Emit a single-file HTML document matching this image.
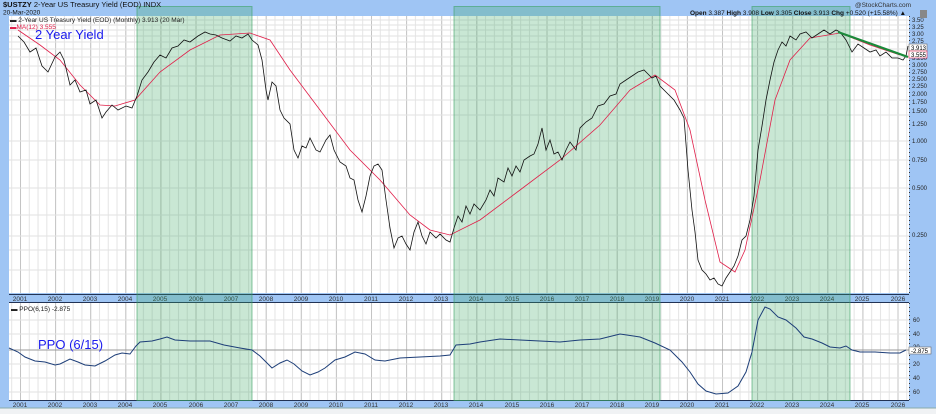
<!DOCTYPE html>
<html><head><meta charset="utf-8"><style>
html,body{margin:0;padding:0;background:#fff;}
svg{display:block;font-family:"Liberation Sans",sans-serif;}
</style></head><body>
<svg width="936" height="414" viewBox="0 0 936 414" xmlns="http://www.w3.org/2000/svg">
<defs>
<pattern id="minor" x="20" y="0" width="8.775" height="414" patternUnits="userSpaceOnUse">
<line x1="0.5" y1="0" x2="0.5" y2="414" stroke="#e4e4e4" stroke-width="1"/>
</pattern>
<pattern id="major" x="20" y="0" width="35.1" height="414" patternUnits="userSpaceOnUse">
<line x1="0.5" y1="0" x2="0.5" y2="414" stroke="#c4c4c4" stroke-width="1"/>
</pattern>
</defs>
<rect x="0" y="0" width="936" height="414" fill="#9fc5f4"/>
<rect x="0" y="408" width="936" height="6" fill="#f0f2f4"/>
<rect x="9" y="16" width="900" height="277" fill="#fff"/>
<rect x="9" y="16" width="900" height="277" fill="url(#minor)"/>
<rect x="9" y="16" width="900" height="277" fill="url(#major)"/>
<g stroke="#e2e2e2">
<line x1="9" y1="20" x2="909" y2="20"/><line x1="9" y1="25" x2="909" y2="25"/><line x1="9" y1="30" x2="909" y2="30"/>
<line x1="9" y1="36" x2="909" y2="36"/><line x1="9" y1="42" x2="909" y2="42"/><line x1="9" y1="49" x2="909" y2="49"/>
<line x1="9" y1="57" x2="909" y2="57"/><line x1="9" y1="66" x2="909" y2="66"/><line x1="9" y1="76" x2="909" y2="76"/>
<line x1="9" y1="86" x2="909" y2="86"/><line x1="9" y1="100" x2="909" y2="100"/><line x1="9" y1="115" x2="909" y2="115"/>
<line x1="9" y1="141" x2="909" y2="141"/><line x1="9" y1="160" x2="909" y2="160"/><line x1="9" y1="188" x2="909" y2="188"/>
<line x1="9" y1="215" x2="909" y2="215"/><line x1="9" y1="236" x2="909" y2="236"/><line x1="9" y1="250" x2="909" y2="250"/><line x1="9" y1="270" x2="909" y2="270"/>
</g>
<rect x="9" y="303" width="900" height="97" fill="#fff"/>
<rect x="9" y="303" width="900" height="97" fill="url(#minor)"/>
<rect x="9" y="303" width="900" height="97" fill="url(#major)"/>
<g stroke="#e2e2e2">
<line x1="9" y1="320" x2="909" y2="320"/><line x1="9" y1="334" x2="909" y2="334"/><line x1="9" y1="364" x2="909" y2="364"/><line x1="9" y1="378" x2="909" y2="378"/><line x1="9" y1="392" x2="909" y2="392"/>
</g>
<line x1="9" y1="350" x2="909" y2="350" stroke="#999"/>
<rect x="9" y="294" width="900" height="9" fill="#9fc5f4"/>
<line x1="9" y1="294.5" x2="909" y2="294.5" stroke="#223355"/>
<line x1="9" y1="302.5" x2="909" y2="302.5" stroke="#223355"/>
<line x1="9" y1="400.5" x2="909" y2="400.5" stroke="#223355"/>
<line x1="0" y1="408" x2="936" y2="408" stroke="#8aa" />
<g font-size="6.5" fill="#333" text-anchor="middle">
<text x="20" y="301">2001</text><text x="55" y="301">2002</text><text x="90" y="301">2003</text><text x="125" y="301">2004</text><text x="160" y="301">2005</text><text x="196" y="301">2006</text><text x="231" y="301">2007</text><text x="266" y="301">2008</text><text x="301" y="301">2009</text><text x="336" y="301">2010</text><text x="371" y="301">2011</text><text x="406" y="301">2012</text><text x="441" y="301">2013</text><text x="476" y="301">2014</text><text x="512" y="301">2015</text><text x="547" y="301">2016</text><text x="582" y="301">2017</text><text x="617" y="301">2018</text><text x="652" y="301">2019</text><text x="687" y="301">2020</text><text x="722" y="301">2021</text><text x="757" y="301">2022</text><text x="792" y="301">2023</text><text x="827" y="301">2024</text><text x="862" y="301">2025</text><text x="898" y="301">2026</text>
</g>
<g font-size="6.5" fill="#333" text-anchor="middle">
<text x="20" y="407">2001</text><text x="55" y="407">2002</text><text x="90" y="407">2003</text><text x="125" y="407">2004</text><text x="160" y="407">2005</text><text x="196" y="407">2006</text><text x="231" y="407">2007</text><text x="266" y="407">2008</text><text x="301" y="407">2009</text><text x="336" y="407">2010</text><text x="371" y="407">2011</text><text x="406" y="407">2012</text><text x="441" y="407">2013</text><text x="476" y="407">2014</text><text x="512" y="407">2015</text><text x="547" y="407">2016</text><text x="582" y="407">2017</text><text x="617" y="407">2018</text><text x="652" y="407">2019</text><text x="687" y="407">2020</text><text x="722" y="407">2021</text><text x="757" y="407">2022</text><text x="792" y="407">2023</text><text x="827" y="407">2024</text><text x="862" y="407">2025</text><text x="898" y="407">2026</text>
</g>
<g fill="rgba(60,170,100,0.28)" stroke="rgba(60,160,100,0.6)" stroke-width="1">
<rect x="137" y="6.5" width="115" height="394"/>
<rect x="454" y="6.5" width="206" height="394"/>
<rect x="752" y="6.5" width="98" height="394"/>
</g>
<polyline fill="none" stroke="#e0204a" stroke-width="0.8" points="18,30 40,45 60,60 80,85 100,105 115,106 135,100 160,72 190,50 220,35 250,33 270,40 290,70 320,110 350,150 380,180 410,215 430,230 450,235 480,220 520,190 560,160 600,125 630,90 655,75 675,90 690,130 705,200 720,262 735,272 745,250 760,180 775,100 790,60 810,38 840,33 870,45 900,55"/>
<polyline fill="none" stroke="#111" stroke-width="0.8" points="18,36 24,42 30,52 36,48 42,66 48,72 55,57 60,52 64,60 70,85 75,80 80,92 86,90 90,104 96,100 102,118 106,112 112,105 118,110 126,106 132,108 137,96 142,80 148,72 154,62 160,55 166,58 172,48 178,46 184,40 190,42 198,36 205,32 210,34 216,35 222,38 230,41 236,36 242,38 248,34 252,40 258,45 262,60 266,90 268,100 272,82 276,86 280,110 284,118 290,124 294,150 298,158 302,146 306,148 310,138 316,150 320,152 326,140 330,135 334,150 340,162 346,166 350,178 354,180 358,200 362,212 366,196 370,176 374,166 378,164 382,170 386,200 390,228 394,248 398,238 402,236 406,244 410,250 414,232 418,222 422,236 426,244 430,232 436,238 440,234 446,240 450,242 454,228 458,216 462,222 466,206 470,214 474,204 480,210 486,200 490,190 494,196 498,178 504,182 508,168 512,176 516,166 520,172 524,160 530,156 534,154 538,144 542,128 546,150 550,140 554,154 558,152 562,160 566,150 570,142 576,150 580,128 586,122 592,118 598,106 604,104 610,96 616,94 620,84 626,80 632,76 638,72 644,70 648,74 652,78 656,76 660,86 666,92 670,96 674,100 680,110 684,118 688,170 692,210 695,232 698,260 702,270 706,274 710,280 714,278 718,284 722,286 726,278 730,272 734,266 738,256 742,240 746,236 750,220 754,196 758,150 762,126 766,100 770,80 774,62 778,50 782,42 786,46 790,36 796,40 800,34 806,32 812,38 818,34 824,30 830,34 836,30 840,32 846,40 852,52 858,44 864,48 870,52 876,50 880,56 886,52 892,58 898,58 903,60 906,56 908,46"/>
<line x1="838" y1="32" x2="908" y2="57" stroke="#1a8a3a" stroke-width="2.2"/>
<polyline fill="none" stroke="#1d3e78" stroke-width="1" points="9,348 18,352 25,357 35,361 45,362 55,365 60,364 70,359 78,362 85,365 95,366 105,361 115,355 122,353 130,354 136,346 140,342 152,341 160,339 167,337 175,340 190,341 210,341 224,345 240,348 252,350 260,356 266,362 272,368 280,363 287,360 294,364 302,371 310,375 318,372 325,368 335,360 345,357 355,352 365,354 375,360 385,361 400,358 420,357 440,356 450,355 456,345 470,344 480,342 500,339 520,340 540,341 560,342 580,340 600,339 620,334 640,337 655,343 670,350 682,362 690,372 698,384 706,391 716,394 728,393 738,386 746,372 752,352 758,320 765,307 770,309 778,317 786,320 796,328 804,337 812,339 822,343 830,347 840,348 846,346 852,350 860,352 875,352 890,353 900,353 906,350"/>
<line x1="909.5" y1="16" x2="909.5" y2="293" stroke="#333" stroke-dasharray="1,3"/>
<line x1="909.5" y1="303" x2="909.5" y2="400" stroke="#333" stroke-dasharray="1,3"/>
<g font-size="6" fill="#222">
<text x="912" y="22">3.50</text><text x="912" y="29">3.25</text><text x="912" y="36">3.00</text><text x="912" y="43">2.75</text><text x="912" y="60">3.250</text><text x="912" y="67">3.000</text><text x="912" y="74">2.750</text><text x="912" y="81">2.500</text><text x="912" y="88">2.250</text><text x="912" y="96">2.000</text><text x="912" y="104">1.750</text><text x="912" y="113">1.500</text><text x="912" y="126">1.250</text><text x="912" y="143">1.000</text><text x="912" y="162">0.750</text><text x="912" y="190">0.500</text><text x="912" y="237">0.250</text>
<text x="913" y="322">60</text><text x="913" y="336">40</text><text x="913" y="349">20</text><text x="913" y="366">20</text><text x="913" y="380">40</text><text x="913" y="394">60</text>
</g>
<rect x="909" y="44" width="18" height="7" fill="#fff" stroke="#666" stroke-width="0.6"/>
<text x="911" y="50" font-size="6" fill="#000">3.913</text>
<rect x="909" y="51" width="18" height="7" fill="#fff" stroke="#e0204a" stroke-width="0.6"/>
<text x="911" y="57" font-size="6" fill="#000">3.555</text>
<rect x="909" y="347" width="22" height="7" fill="#fff" stroke="#666" stroke-width="0.6"/>
<text x="911" y="353" font-size="6" fill="#000">-2.875</text>
<text x="3" y="7" font-size="7.5" fill="#111"><tspan font-weight="bold">$USTZY</tspan> 2-Year US Treasury Yield (EOD) INDX</text>
<text x="3" y="14.5" font-size="6.5" fill="#111">20-Mar-2020</text>
<text x="10" y="22" font-size="6.5" fill="#222">▬ 2-Year US Treasury Yield (EOD) (Monthly) 3.913 (20 Mar)</text>
<text x="10" y="29" font-size="6.5" fill="#e0204a">▬MA(12) 3.555</text>
<text x="35" y="39" font-size="13" fill="#1a1aee">2 Year Yield</text>
<text x="38" y="349" font-size="13" fill="#1a1aee">PPO (6/15)</text>
<text x="11" y="311" font-size="6.5" fill="#222">▬ PPO(6,15) -2.875</text>
<text x="855" y="7" font-size="6.5" fill="#333">@StockCharts.com</text>
<text x="690" y="15" font-size="6.5" fill="#111"><tspan font-weight="bold">Open</tspan> 3.387 <tspan font-weight="bold">High</tspan> 3.908 <tspan font-weight="bold">Low</tspan> 3.305 <tspan font-weight="bold">Close</tspan> 3.913 <tspan font-weight="bold">Chg</tspan> +0.520 (+15.58%) ▲</text>
<rect x="920" y="10" width="7" height="8" fill="#888"/>
</svg>
</body></html>
